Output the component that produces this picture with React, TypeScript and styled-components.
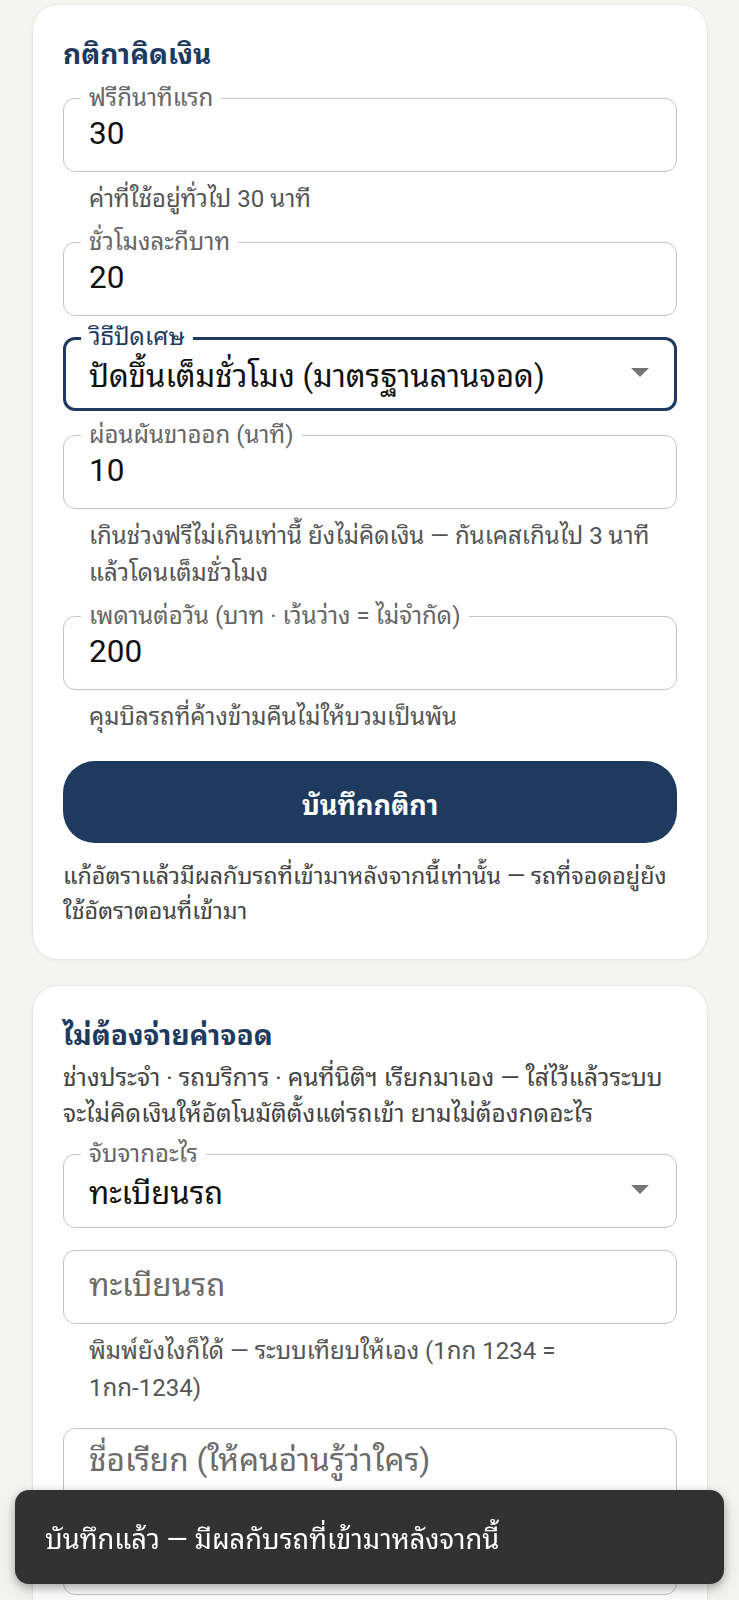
import React from 'react';
import styled, { createGlobalStyle } from 'styled-components';

const GlobalStyle = createGlobalStyle`
  html, body {
    margin: 0;
    padding: 0;
    background: #f4f4f1;
  }
  body {
    font-family: Roboto, "Noto Sans Thai Looped", sans-serif;
    color: #1c1c1c;
  }
  * {
    box-sizing: border-box;
  }
`;

const Page = styled.div`
  height: 100vh;
  overflow: hidden;
  padding: 4px 31px 0 32px;
  display: flex;
  flex-direction: column;
  gap: 25px;
`;

const Card = styled.section`
  flex-shrink: 0;
  background: #fff;
  border: 1px solid #e7e7e4;
  border-radius: 26px;
  box-shadow: 0 1px 3px rgba(0, 0, 0, 0.04);
  padding: 30px;
  display: flex;
  flex-direction: column;
`;

const Title = styled.h2`
  margin: 0;
  font-size: 28px;
  line-height: 40px;
  font-weight: 700;
  color: #1e3a5f;
`;

const Description = styled.p`
  margin: 4px 0 0;
  font-size: 24.5px;
  line-height: 36px;
  color: #444;
`;

const Group = styled.div<{ $space: number }>`
  margin-top: ${(p) => p.$space}px;
  display: flex;
  flex-direction: column;
`;

const Box = styled.div<{ $focused?: boolean; $tall?: boolean }>`
  position: relative;
  height: ${(p) => (p.$tall ? 167 : 74)}px;
  border: ${(p) => (p.$focused ? '3px solid #1e3a5f' : '1px solid #c4c4c4')};
  border-radius: 12px;
  display: flex;
  align-items: ${(p) => (p.$tall ? 'flex-start' : 'center')};
  padding: ${(p) => (p.$focused ? '0 23px 3px' : '0 25px 3px')};
`;

const Label = styled.span<{ $focused?: boolean }>`
  position: absolute;
  top: ${(p) => (p.$focused ? -17 : -15)}px;
  left: ${(p) => (p.$focused ? 15 : 17)}px;
  padding: 0 8px;
  background: #fff;
  font-size: 24px;
  line-height: 28px;
  color: ${(p) => (p.$focused ? '#1e3a5f' : '#666')};
  white-space: nowrap;
`;

const Value = styled.input`
  flex: 1;
  min-width: 0;
  border: none;
  outline: none;
  padding: 0;
  background: transparent;
  font-family: inherit;
  font-size: 31.5px;
  color: #111;
  &::placeholder {
    color: #6b6b6b;
    opacity: 1;
  }
`;

const SelectText = styled.div`
  flex: 1;
  font-size: 31px;
  color: #111;
  white-space: nowrap;
`;

const Multi = styled.textarea`
  flex: 1;
  height: 100%;
  border: none;
  outline: none;
  resize: none;
  padding: 12px 0 0;
  background: transparent;
  font-family: inherit;
  font-size: 31.5px;
  line-height: 40px;
  color: #111;
  &::placeholder {
    color: #6b6b6b;
    opacity: 1;
  }
`;

const Helper = styled.div`
  margin: 9px 26px 0;
  font-size: 24px;
  line-height: 37px;
  color: #555;
`;

const SaveButton = styled.button`
  margin-top: 25px;
  height: 82px;
  border: none;
  border-radius: 32px;
  background: #1e3a5f;
  color: #fff;
  font-family: inherit;
  font-size: 27px;
  font-weight: 700;
  cursor: pointer;
`;

const Note = styled.p`
  margin: 16px 0 0;
  font-size: 23.3px;
  line-height: 35px;
  color: #444;
`;

const Toast = styled.div`
  position: fixed;
  left: 15px;
  right: 15px;
  bottom: 16px;
  height: 94px;
  padding: 0 30px;
  display: flex;
  align-items: center;
  background: #323232;
  border-radius: 14px;
  box-shadow: 0 3px 8px rgba(0, 0, 0, 0.25), 0 6px 18px rgba(0, 0, 0, 0.15);
  color: #fff;
  font-size: 27.3px;
`;

const Arrow = () => (
  <svg width="18" height="9" viewBox="0 0 18 9" style={{ marginRight: 2 }}>
    <polygon points="0,0 18,0 9,9" fill="#757575" />
  </svg>
);

type FieldProps = {
  label?: string;
  value?: string;
  placeholder?: string;
  helper?: string;
  space: number;
};

const Field: React.FC<FieldProps> = ({ label, value, placeholder, helper, space }) => (
  <Group $space={space}>
    <Box>
      {label && <Label>{label}</Label>}
      <Value defaultValue={value} placeholder={placeholder} />
    </Box>
    {helper && <Helper>{helper}</Helper>}
  </Group>
);

type SelectProps = {
  label: string;
  value: string;
  focused?: boolean;
  space: number;
};

const SelectField: React.FC<SelectProps> = ({ label, value, focused, space }) => (
  <Group $space={space}>
    <Box $focused={focused}>
      <Label $focused={focused}>{label}</Label>
      <SelectText>{value}</SelectText>
      <Arrow />
    </Box>
  </Group>
);

export default function App() {
  return (
    <>
      <GlobalStyle />
      <Page>
        <Card>
          <Title>กติกาคิดเงิน</Title>
          <Field label="ฟรีกีนาทีแรก" value="30" helper="ค่าที่ใช้อยู่ทั่วไป 30 นาที" space={23} />
          <Field label="ชั่วโมงละกีบาท" value="20" space={24} />
          <SelectField label="วิธีปัดเศษ" value="ปัดขึ้นเต็มชั่วโมง (มาตรฐานลานจอด)" focused space={21} />
          <Field
            label="ผ่อนผันขาออก (นาที)"
            value="10"
            helper="เกินช่วงฟรีไม่เกินเท่านี้ ยังไม่คิดเงิน — กันเคสเกินไป 3 นาทีแล้วโดนเต็มชั่วโมง"
            space={24}
          />
          <Field
            label="เพดานต่อวัน (บาท · เว้นว่าง = ไม่จำกัด)"
            value="200"
            helper="คุมบิลรถที่ค้างข้ามคืนไม่ให้บวมเป็นพัน"
            space={24}
          />
          <SaveButton>บันทึกกติกา</SaveButton>
          <Note>แก้อัตราแล้วมีผลกับรถที่เข้ามาหลังจากนี้เท่านั้น — รถที่จอดอยู่ยังใช้อัตราตอนที่เข้ามา</Note>
        </Card>

        <Card>
          <Title>ไม่ต้องจ่ายค่าจอด</Title>
          <Description>
            ช่างประจำ · รถบริการ · คนที่นิติฯ เรียกมาเอง — ใส่ไว้แล้วระบบจะไม่คิดเงินให้อัตโนมัติตั้งแต่รถเข้า ยามไม่ต้องกดอะไร
          </Description>
          <SelectField label="จับจากอะไร" value="ทะเบียนรถ" space={22} />
          <Field
            placeholder="ทะเบียนรถ"
            helper="พิมพ์ยังไงก็ได้ — ระบบเทียบให้เอง (1กก 1234 = 1กก-1234)"
            space={22}
          />
          <Group $space={21}>
            <Box $tall>
              <Multi placeholder="ชื่อเรียก (ให้คนอ่านรู้ว่าใคร)" />
            </Box>
          </Group>
        </Card>
      </Page>
      <Toast>บันทึกแล้ว — มีผลกับรถที่เข้ามาหลังจากนี้</Toast>
    </>
  );
}
